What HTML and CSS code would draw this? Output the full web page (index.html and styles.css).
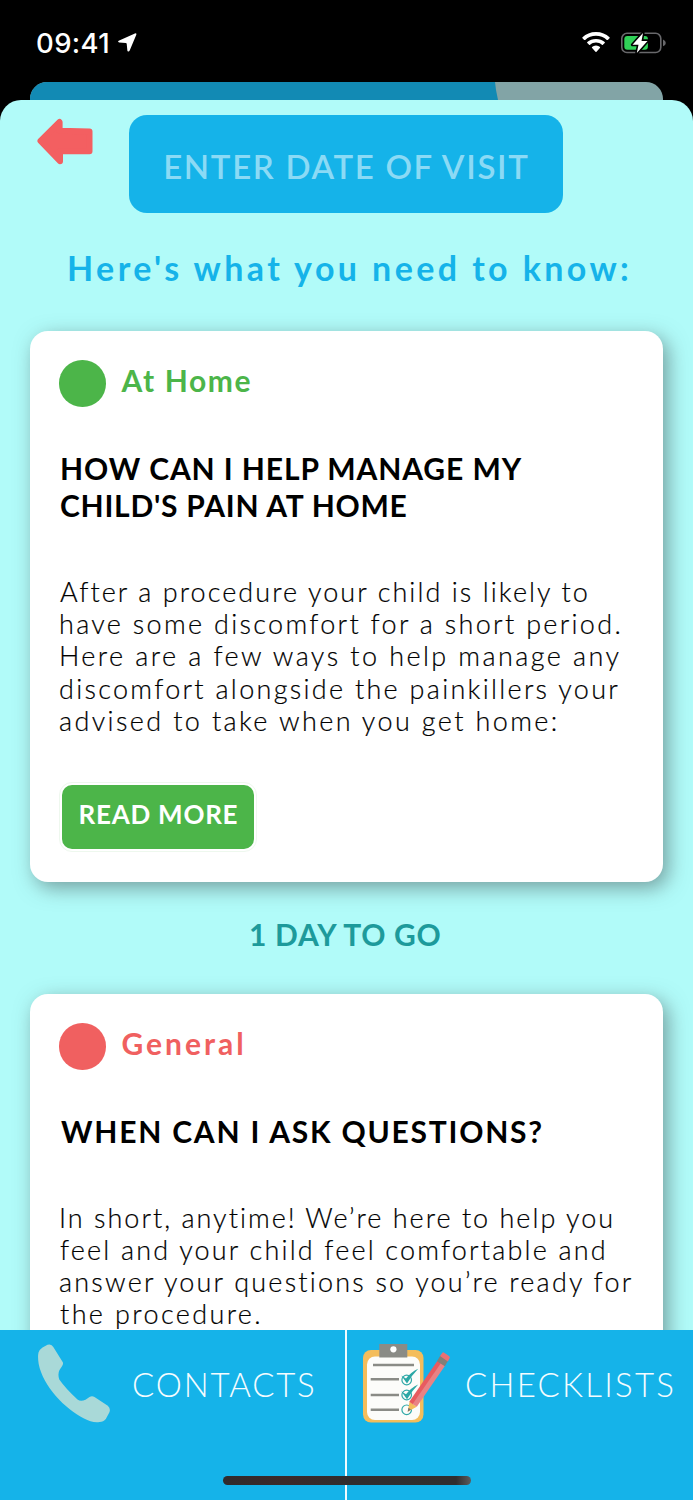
FILE: index.html
```
<!DOCTYPE html>
<html lang="en">
<head>
<meta charset="utf-8">
<title>Hospital visit guide</title>
<link rel="stylesheet" href="styles.css">
</head>
<body>
<div class="phone">
  <header class="status">
    <span class="time">09:41</span>
    <svg class="location" width="19" height="19" viewBox="0 0 19 19"><path d="M.7 7.700 16.900.4Q18.800-.2 18.300 1.700L11.700 17.500Q10.500 19.500 9.400 17.700L8.700 10.700Q8.600 9.900 7.800 9.900L1.200 9.600Q-.8 8.800.7 7.700z" fill="#fff"/></svg>
    <svg class="wifi" width="28" height="21" viewBox="0 0 28 21" fill="#fff"><path d="M14 0C8.500 0 3.900 2 .5 5.200Q0 5.800.5 6.300L2.200 7.900Q2.700 8.300 3.200 7.900C6.200 5.200 9.900 3.800 14 3.800S21.800 5.200 24.800 7.900Q25.300 8.300 25.800 7.900L27.500 6.300Q28 5.800 27.500 5.200C24.100 2 19.500 0 14 0z"/><path d="M14 6.900C10.500 6.900 7.600 8.100 5.300 10.100Q4.800 10.600 5.300 11.100L7.100 12.800Q7.600 13.200 8.100 12.800C9.800 11.400 11.700 10.600 14 10.600S18.200 11.400 19.900 12.800Q20.400 13.200 20.900 12.800L22.700 11.100Q23.200 10.600 22.700 10.100C20.400 8.100 17.500 6.900 14 6.900z"/><path d="M14 13.500Q11.500 13.500 10 15.100 9.700 15.600 10.100 16L13.500 19.700Q14 20.100 14.500 19.700L17.900 16Q18.300 15.600 18 15.100 16.500 13.500 14 13.500z"/></svg>
    <svg class="battery" width="45" height="22" viewBox="0 0 45 22"><rect x=".8" y="1.300" width="39" height="19.200" rx="5.200" fill="none" stroke="#68686b" stroke-width="1.600"/><path d="M42 7.500Q44.800 8.700 44.800 11T42 14.200z" fill="#68686b"/><rect x="3.300" y="4" width="23.600" height="13.800" rx="3" fill="#30d158"/><path d="M22 1 11.500 12.700H17.500L15.800 21 26.500 8.900H20.500z" fill="#fff" stroke="#000" stroke-width="3.200" paint-order="stroke" stroke-linejoin="round"/></svg>
  </header>
  <div class="behind"><div class="behind-fill"></div></div>
  <main class="sheet">
    <div class="top">
      <svg class="back" width="57" height="47" viewBox="0 0 57 47"><path d="M3.500 23 22.600 4V12.800L52.500 13.500V33.200H23V43.200z" fill="#f35f61" stroke="#f35f61" stroke-width="6" stroke-linejoin="round"/></svg>
      <div class="date">ENTER DATE OF VISIT</div>
    </div>
    <h1 class="intro">Here's what you need to know:</h1>
    <section class="card">
      <div class="tag tag-home"><i class="dot"></i><span class="tag-text">At Home</span></div>
      <h2 class="title"><span class="line t1">HOW CAN I HELP MANAGE MY</span><span class="line t2">CHILD'S PAIN AT HOME</span></h2>
      <p class="copy"><span class="line a1">After a procedure your child is likely to</span><span class="line a2">have some discomfort for a short period.</span><span class="line a3">Here are a few ways to help manage any</span><span class="line a4">discomfort alongside the painkillers your</span><span class="line a5">advised to take when you get home:</span></p>
      <div class="more"><span class="more-fill">READ MORE</span></div>
    </section>
    <div class="countdown">1 DAY TO GO</div>
    <section class="card card-last">
      <div class="tag tag-general"><i class="dot"></i><span class="tag-text">General</span></div>
      <h2 class="title"><span class="line t3">WHEN CAN I ASK QUESTIONS?</span></h2>
      <p class="copy"><span class="line b1">In short, anytime! We’re here to help you</span><span class="line b2">feel and your child feel comfortable and</span><span class="line b3">answer your questions so you’re ready for</span><span class="line b4">the procedure.</span></p>
    </section>
  </main>
  <nav class="nav">
    <div class="tab tab-contacts">
      <svg class="phone-icon" width="72" height="79" viewBox="0 0 72 79"><path d="M9.500.8Q13.500-.5 15.300 3L24.800 18.300Q25.600 20 24 22.200L21.500 26Q19.500 30 21.300 35.500 28 45 39.500 55.500 42.500 58 47.500 55.800L51.500 53Q54 51.300 56.500 53L69.800 61.800Q73 64.500 71.300 68.500L67.800 75Q65.500 78 61.500 78 54 79 46 74.500C27 65 5 42 .7 20Q-.5 13 .5 8.500 1.500 5.500 4.500 3.500z" fill="#a9d9d8"/></svg>
      <span class="tab-text contacts">CONTACTS</span>
    </div>
    <div class="tab tab-checklists">
      <svg class="list-icon" width="88" height="80" viewBox="0 0 88 80">
        <rect x="0" y="6" width="60.500" height="72.500" rx="8" fill="#f4bd5b"/>
        <rect x="4" y="12.500" width="53" height="63.500" rx="8" fill="#fcfcfa"/>
        <rect x="16.300" y="0" width="28" height="13.500" fill="#8a8b86"/><circle cx="30.400" cy="5.300" r="3.100" fill="#fff"/>
        <path d="M10 21H51M7.700 35.300H36M7.700 51H36M7.700 65.800H36" stroke="#8a8b86" stroke-width="2.600"/>
        <g fill="none" stroke="#31a9a8" stroke-width="1.200"><circle cx="43.700" cy="36" r="4.800"/><circle cx="43.700" cy="51" r="4.800"/><circle cx="43.700" cy="65.800" r="4.800"/></g>
        <path d="M38.200 31.500 43 34.500Q48 28 55.200 24.700 49 31 44 39.500 41.500 36 38.200 31.500zM38.200 47.300 43 50.300Q48 43.800 55.200 40.500 49 46.800 44 55.300 41.500 51.800 38.200 47.300z" fill="#2ba7a5"/>
        <path d="M44.700 67.700 46.600 57.500 53.800 62.800z" fill="#f4bd5b"/>
        <path d="M44.700 67.700 45.400 63.700 48 65.500z" fill="#77736b"/>
        <path d="M46.300 57.800 74.500 16.700 78.500 19.400 50.200 60.500z" fill="#e85b5f"/><path d="M49.700 60.100 78 19 82 21.700 53.800 62.800z" fill="#e98284"/>
        <path d="M74 17.200 77.500 11.300 85.200 16.500 81.800 22.300z" fill="#827f78"/>
        <path d="M77 12 79.200 8.900Q80 7.900 81.200 8.700L86 12Q87.300 13 86.700 14L84.900 17.400z" fill="#ea7074"/>
      </svg>
      <span class="tab-text checklists">CHECKLISTS</span>
    </div>
    <div class="indicator"></div>
  </nav>
</div>
</body>
</html>
```
FILE: styles.css
```
* { box-sizing: border-box; margin: 0; padding: 0; }
body { background: #000; font-family: Lato, "Open Sans", sans-serif; }
.phone { width: 693px; height: 1500px; overflow: hidden; display: flex; flex-direction: column; background: #000; }

.status { height: 82px; flex: none; display: flex; align-items: flex-start; padding: 0 27px 0 36px; }
.time { font: 500 27.5px/34px Inter, sans-serif; letter-spacing: .4px; color: #fff; margin-top: 26px; width: 82px; }
.location { margin-top: 33px; }
.wifi { margin: 32px 11px 0 auto; }
.battery { margin-top: 32px; }

.behind { height: 18px; flex: none; margin: 0 30px; background: #82a4a6; border-radius: 17px 17px 0 0; overflow: hidden; }
.behind-fill { width: 468px; height: 18px; background: #128ab4; clip-path: polygon(0 0, 465px 0, 466px 8px, 468px 18px, 0 18px); }

.sheet { height: 1230px; flex: none; background: #b1fbf9; border-radius: 21px 21px 0 0; overflow: hidden; }
.top { display: flex; align-items: flex-start; padding: 15px 0 0 37px; }
.back { margin-top: 3px; }
.date { width: 434px; height: 97.500px; margin-left: 35.400px; border-radius: 18px; background: #15b3e9; color: #8bdaf5; font-size: 33px; font-weight: 600; line-height: 102px; letter-spacing: 1.680px; text-align: center; white-space: nowrap; }
.intro { margin-top: 35.500px; padding-left: 67px; font-size: 34px; font-weight: 700; line-height: 40px; letter-spacing: 3.400px; color: #15b3e9; white-space: nowrap; }

.card { width: 633px; height: 551px; margin: 43px 0 0 30px; padding: 29px 0 0 29px; border-radius: 18px; background: #fff; box-shadow: 5px 6px 20px rgba(70, 90, 90, .56); }
.tag { height: 46px; display: flex; gap: 17px; }
.dot { width: 46.500px; height: 46.500px; flex: none; border-radius: 50%; background: currentColor; }
.tag-text { font-size: 30px; font-weight: 700; line-height: 40px; white-space: nowrap; }
.tag-home { color: #4cb549; }
.tag-home .tag-text { margin-left: -1px; letter-spacing: 1.600px; }
.tag-general { color: #f06060; }
.tag-general .tag-text { margin-left: -1px; letter-spacing: 3px; }

.line { display: block; white-space: nowrap; }
.title { margin-top: 43.500px; font-size: 30px; font-weight: 700; line-height: 37.500px; color: #000; }
.t1 { margin-left: 1px; letter-spacing: .900px; }
.t2 { margin-left: 1px; letter-spacing: .750px; }
.t3 { margin-left: 2px; letter-spacing: 1.780px; }

.copy { margin-top: 51.500px; font-size: 27px; font-weight: 300; line-height: 32.200px; color: #000; -webkit-text-stroke: .2px #000; }
.a1 { margin-left: 1px; letter-spacing: 2.060px; }
.a2 { letter-spacing: 2.300px; }
.a3 { letter-spacing: 2.420px; }
.a4 { letter-spacing: 2.292px; }
.a5 { letter-spacing: 2.371px; }
.b1 { letter-spacing: 2.003px; }
.b2 { margin-left: 1px; letter-spacing: 2.180px; }
.b3 { letter-spacing: 2.190px; }
.b4 { margin-left: 1px; letter-spacing: 2.380px; }

.more { width: 198px; height: 70px; margin-top: 45px; padding: 2px; border: 1px solid #eef8ee; border-radius: 13px; }
.more-fill { display: block; height: 64px; border-radius: 10px; background: #4cb549; color: #fff; padding-left: 16.500px; font-size: 26px; font-weight: 700; line-height: 59px; letter-spacing: .750px; white-space: nowrap; }

.countdown { margin: 33px 0 0 249px; height: 36px; font-size: 30px; font-weight: 700; line-height: 38px; letter-spacing: .700px; color: #1d9a9b; }
.card-last { height: 600px; }

.nav { position: relative; height: 170px; flex: none; display: flex; background: #15b3e9; }
.tab { display: flex; align-items: flex-start; color: #f4fcff; }
.tab-contacts { width: 347px; padding: 14px 0 0 38px; border-right: 2px solid #f0fbff; }
.tab-checklists { flex: 1; padding: 14px 0 0 16px; }
.tab-text { margin-top: 19px; font-size: 33px; font-weight: 300; line-height: 42px; white-space: nowrap; }
.contacts { margin-left: 22px; letter-spacing: 1.850px; }
.checklists { margin-left: 14px; letter-spacing: 2.240px; }
.indicator { position: absolute; left: 223px; bottom: 15px; width: 247.500px; height: 9.500px; border-radius: 5px; background: linear-gradient(90deg, #302b2c, #3b2929 25%, #302d2e 50%, #302e2f 94%, #5b5b5d); }
```
